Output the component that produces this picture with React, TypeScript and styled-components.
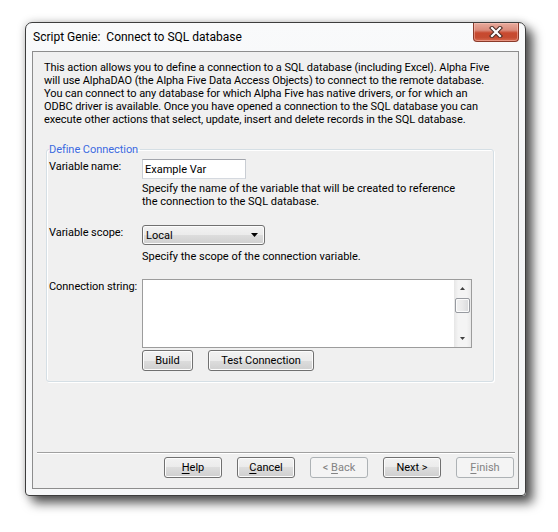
import React from 'react';
import styled, { createGlobalStyle } from 'styled-components';

const Global = createGlobalStyle`
  html, body { margin: 0; padding: 0; background: #ffffff; }
  body {
    font-family: Roboto, "Liberation Sans", sans-serif;
    font-size: 11px;
    color: #000;
    -webkit-font-smoothing: antialiased;
  }
`;

const Page = styled.div`
  width: 558px;
  height: 532px;
  box-sizing: border-box;
  padding: 22px 0 0 25px;
  background: #fff;
  overflow: hidden;
`;

const Window = styled.div`
  width: 501px;
  height: 474px;
  box-sizing: border-box;
  display: flex;
  flex-direction: column;
  padding: 0 6px 6px 6px;
  border: 1px solid #3d3d3d;
  border-radius: 7px 7px 4px 4px;
  background: linear-gradient(180deg, #f9fafb 0%, #f3f4f6 40%, #f7f8f9 100%);
  box-shadow: 7px 7px 11px rgba(0, 0, 0, 0.66), 0 0 8px rgba(0, 0, 0, 0.22);
`;

const TitleBar = styled.div`
  height: 28px;
  display: flex;
  justify-content: space-between;
  align-items: flex-start;
  flex-shrink: 0;
`;

const TitleText = styled.div`
  font-size: 12px;
  line-height: 15px;
  margin: 7px 0 0 1px;
  white-space: pre;
  color: #000;
`;

const CloseButton = styled.div`
  width: 46px;
  height: 19px;
  box-sizing: border-box;
  display: flex;
  align-items: center;
  justify-content: center;
  border: 1px solid #8a3a2a;
  border-top: none;
  border-radius: 0 0 4px 4px;
  background: linear-gradient(180deg, #e8ab9d 0%, #da8b7b 40%, #c8492f 55%, #c54b31 80%, #d76a4f 100%);
  box-shadow: inset 0 0 0 1px rgba(255, 205, 195, 0.45);
`;

const Client = styled.div`
  flex: 1;
  display: flex;
  flex-direction: column;
  border: 1px solid #8d8d8d;
  background: #f0f0f0;
`;

const Intro = styled.div`
  padding: 9px 0 0 11px;
  line-height: 13px;
`;

const Line = styled.div`
  white-space: nowrap;
  letter-spacing: -0.07px;
`;

const GroupBox = styled.fieldset`
  margin: 17px 0 0 13px;
  width: 448px;
  box-sizing: border-box;
  padding: 3px 0 10px 2px;
  border: 1px solid #d5dfe5;
  border-radius: 3px;
  box-shadow: inset 1px 1px 0 #ffffff, 1px 1px 0 #ffffff;
  min-width: 0;
`;

const Legend = styled.legend`
  padding: 0 2px 0 0;
  line-height: 13px;
  color: #3b6ae0;
  letter-spacing: -0.05px;
`;

const FieldRow = styled.div<{ $mt: number }>`
  display: grid;
  grid-template-columns: 93px 1fr;
  margin-top: ${(p) => p.$mt}px;
`;

const FieldLabel = styled.div`
  padding-top: 1px;
  line-height: 13px;
  white-space: nowrap;
  letter-spacing: -0.05px;
`;

const FieldBody = styled.div`
  display: flex;
  flex-direction: column;
  align-items: flex-start;
`;

const TextBox = styled.div`
  width: 104px;
  height: 20px;
  box-sizing: border-box;
  padding: 0 2px;
  display: flex;
  align-items: center;
  background: #fff;
  border: 1px solid #abadb3;
  border-color: #a3a6ad #c9cdd3 #d5d9df #c9cdd3;
`;

const ComboBox = styled.div`
  width: 123px;
  height: 20px;
  box-sizing: border-box;
  padding: 0 6px 0 3px;
  display: flex;
  align-items: center;
  justify-content: space-between;
  border: 1px solid #707070;
  border-radius: 3px;
  background: linear-gradient(180deg, #f2f2f2 0%, #ebebeb 50%, #dddddd 50%, #cfcfcf 100%);
  box-shadow: inset 0 0 0 1px #fcfcfc;
`;

const HelpText = styled.div<{ $mt: number }>`
  margin-top: ${(p) => p.$mt}px;
  line-height: 13px;
  white-space: nowrap;
  letter-spacing: 0px;
`;

const TextArea = styled.div`
  width: 330px;
  height: 69px;
  box-sizing: border-box;
  display: flex;
  border: 1px solid #9c9c9c;
  background: #fff;
`;

const TextContent = styled.div`
  flex: 1;
`;

const ScrollBar = styled.div`
  width: 17px;
  display: flex;
  flex-direction: column;
  align-items: center;
  background: linear-gradient(90deg, #e6e6e6 0%, #f4f4f4 25%, #f4f4f4 75%, #e9e9e9 100%);
`;

const ScrollArrow = styled.div`
  height: 17px;
  width: 17px;
  display: flex;
  align-items: center;
  justify-content: center;
  flex-shrink: 0;
`;

const ScrollThumb = styled.div`
  width: 15px;
  height: 15px;
  box-sizing: border-box;
  margin-top: 1px;
  border: 1px solid #979aa0;
  border-radius: 2px;
  background: linear-gradient(90deg, #f1f1f1 0%, #e9e9ea 50%, #d9dadc 100%);
  box-shadow: inset 0 0 0 1px #fbfbfb;
`;

const ScrollTrack = styled.div`
  flex: 1;
`;

const InlineButtons = styled.div`
  display: flex;
  gap: 15px;
  margin-top: 2px;
`;

const Button = styled.div<{ $w: number; $disabled?: boolean }>`
  width: ${(p) => p.$w}px;
  height: 21px;
  box-sizing: border-box;
  display: flex;
  align-items: center;
  justify-content: center;
  border: 1px solid ${(p) => (p.$disabled ? '#adb2b5' : '#707070')};
  border-radius: 3px;
  background: ${(p) =>
    p.$disabled
      ? '#f4f4f4'
      : 'linear-gradient(180deg, #f2f2f2 0%, #ebebeb 50%, #dddddd 50%, #cfcfcf 100%)'};
  box-shadow: ${(p) => (p.$disabled ? 'none' : 'inset 0 0 0 1px #fcfcfc')};
  color: ${(p) => (p.$disabled ? '#838383' : '#000')};
  white-space: pre;
  line-height: 13px;
  padding-bottom: 1px;
`;

const Spacer = styled.div`
  flex: 1;
`;

const Separator = styled.div`
  margin: 0 3px 0 4px;
  height: 0;
  border-top: 1px solid #a0a0a0;
  border-bottom: 1px solid #ffffff;
`;

const Footer = styled.div`
  display: flex;
  justify-content: flex-end;
  gap: 15px;
  padding: 3px 4px 10px 0;
`;

const Mn = styled.span`
  text-decoration: underline;
  text-underline-offset: 2px;
`;

const Tri: React.FC<{ dir: 'up' | 'down'; w: number; h: number; color: string }> = ({ dir, w, h, color }) => (
  <svg width={w} height={h} viewBox={`0 0 ${w} ${h}`}>
    {dir === 'down' ? (
      <polygon points={`0,0 ${w},0 ${w / 2},${h}`} fill={color} />
    ) : (
      <polygon points={`0,${h} ${w},${h} ${w / 2},0`} fill={color} />
    )}
  </svg>
);

const CloseGlyph = () => (
  <svg width="14" height="12" viewBox="0 0 14 12">
    <path d="M3 2 L11 10 M11 2 L3 10" stroke="#4a2b24" strokeWidth="4.2" strokeLinecap="square" />
    <path d="M3 2 L11 10 M11 2 L3 10" stroke="#ffffff" strokeWidth="2.2" strokeLinecap="square" />
  </svg>
);

export default function App() {
  return (
    <>
      <Global />
      <Page>
        <Window>
          <TitleBar>
            <TitleText>{'Script Genie:  Connect to SQL database'}</TitleText>
            <CloseButton>
              <CloseGlyph />
            </CloseButton>
          </TitleBar>
          <Client>
            <Intro>
              <Line>This action allows you to define a connection to a SQL database (including Excel). Alpha Five</Line>
              <Line>will use AlphaDAO (the Alpha Five Data Access Objects) to connect to the remote database.</Line>
              <Line>You can connect to any database for which Alpha Five has native drivers, or for which an</Line>
              <Line>ODBC driver is available. Once you have opened a connection to the SQL database you can</Line>
              <Line>execute other actions that select, update, insert and delete records in the SQL database.</Line>
            </Intro>
            <GroupBox>
              <Legend>Define Connection</Legend>
              <FieldRow $mt={0}>
                <FieldLabel>Variable name:</FieldLabel>
                <FieldBody>
                  <TextBox>Example Var</TextBox>
                  <HelpText $mt={3}>
                    Specify the name of the variable that will be created to reference
                    <br />
                    the connection to the SQL database.
                  </HelpText>
                </FieldBody>
              </FieldRow>
              <FieldRow $mt={17}>
                <FieldLabel>Variable scope:</FieldLabel>
                <FieldBody>
                  <ComboBox>
                    <span>Local</span>
                    <Tri dir="down" w={7} h={4} color="#000" />
                  </ComboBox>
                  <HelpText $mt={5}>Specify the scope of the connection variable.</HelpText>
                </FieldBody>
              </FieldRow>
              <FieldRow $mt={16}>
                <FieldLabel>Connection string:</FieldLabel>
                <FieldBody>
                  <TextArea>
                    <TextContent />
                    <ScrollBar>
                      <ScrollArrow>
                        <Tri dir="up" w={5} h={3} color="#404040" />
                      </ScrollArrow>
                      <ScrollThumb />
                      <ScrollTrack />
                      <ScrollArrow>
                        <Tri dir="down" w={5} h={3} color="#404040" />
                      </ScrollArrow>
                    </ScrollBar>
                  </TextArea>
                  <InlineButtons>
                    <Button $w={51}>Build</Button>
                    <Button $w={106}>Test Connection</Button>
                  </InlineButtons>
                </FieldBody>
              </FieldRow>
            </GroupBox>
            <Spacer />
            <Separator />
            <Footer>
              <Button $w={58}>
                <span><Mn>H</Mn>elp</span>
              </Button>
              <Button $w={58}>
                <span><Mn>C</Mn>ancel</span>
              </Button>
              <Button $w={58} $disabled>
                <span>{'< '}<Mn>B</Mn>ack</span>
              </Button>
              <Button $w={58}>
                <span>{'Next >'}</span>
              </Button>
              <Button $w={58} $disabled>
                <span><Mn>F</Mn>inish</span>
              </Button>
            </Footer>
          </Client>
        </Window>
      </Page>
    </>
  );
}
